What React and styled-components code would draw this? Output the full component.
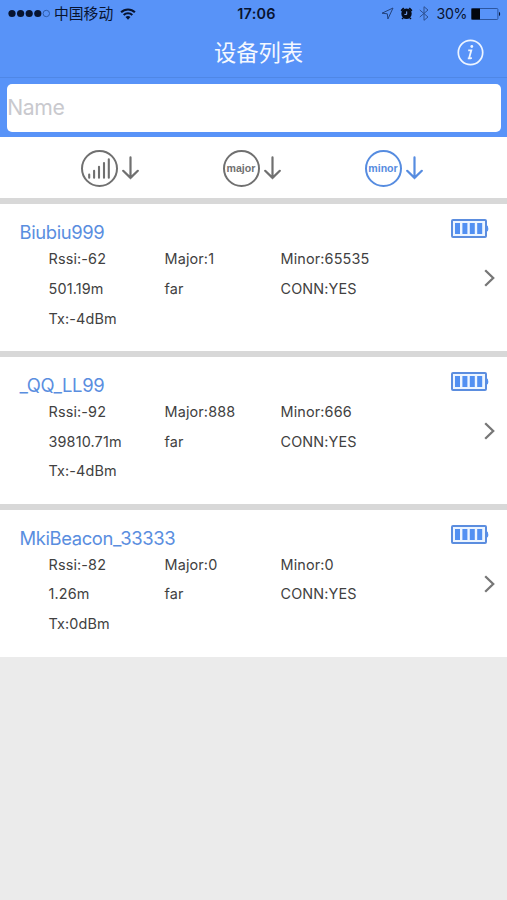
import React, { useState } from "react"
import styled, { createGlobalStyle } from "styled-components"

const GlobalStyle = createGlobalStyle`
  * {
    box-sizing: border-box;
  }
  body {
    margin: 0;
    background: #ebebeb;
    font-family: Inter, "Noto Sans CJK SC", sans-serif;
  }
  svg {
    display: block;
    flex: none;
  }
`

const Screen = styled.div`
  width: 507px;
  min-height: 900px;
  background: #ebebeb;
  overflow: hidden;
`

const Header = styled.header`
  height: 137.3px;
  background: #5893f8;
`

const StatusBar = styled.div`
  height: 27px;
  display: grid;
  grid-template-columns: 1fr auto 1fr;
  align-items: center;
  padding: 0 6px 0 8px;
  color: #081430;
`

const StatusGroup = styled.div`
  display: flex;
  align-items: center;
  justify-content: ${({ $end }) => ($end ? "flex-end" : "flex-start")};
`

const Carrier = styled.span`
  margin: -2px 7px 0 4px;
  font-family: "Noto Sans CJK SC", sans-serif;
  font-size: 14.8px;
  line-height: 27px;
`

const Clock = styled.span`
  padding-left: 4px;
  font-size: 14.4px;
  font-weight: 600;
  letter-spacing: 0.3px;
`

const Percent = styled.span`
  margin: 0 4px 0 8px;
  font-size: 14.2px;
  letter-spacing: -0.4px;
`

const TitleBar = styled.div`
  height: 51px;
  display: grid;
  grid-template-columns: 1fr auto 1fr;
  align-items: center;
  padding: 0 23px 0 33px;
  border-bottom: 1px solid #4f87e6;
`

const Title = styled.h1`
  grid-column: 2;
  margin: 0;
  color: #f4f8ff;
  font-family: "Noto Sans CJK SC", sans-serif;
  font-size: 22.3px;
  font-weight: 400;
  line-height: 48px;
  padding-bottom: 2px;
`

const InfoButton = styled.button`
  justify-self: end;
  padding: 0;
  border: 0;
  background: none;
`

const SearchBox = styled.div`
  padding: 6.3px 6px 0 6.7px;
`

const SearchInput = styled.input`
  display: block;
  width: 100%;
  height: 48px;
  padding: 0 0 2px 0.5px;
  border: 0;
  border-radius: 5px;
  outline: none;
  background: #fff;
  font-family: Inter, sans-serif;
  font-size: 21.2px;
  letter-spacing: -0.4px;
  &::placeholder {
    color: #c9c9ce;
    opacity: 1;
  }
`

const Filters = styled.div`
  height: 61.2px;
  display: grid;
  grid-template-columns: repeat(3, 142px);
  padding: 0 0 0 80.5px;
  background: #fff;
`

const Filter = styled.button`
  display: flex;
  align-items: center;
  gap: 4px;
  padding: 0.6px 0 0;
  border: 0;
  background: none;
  color: ${({ $active }) => ($active ? "#568ce0" : "#707070")};
`

const Badge = styled.span`
  width: 37px;
  height: 37px;
  display: flex;
  align-items: center;
  justify-content: center;
  border: 2px solid currentColor;
  border-radius: 50%;
  font-family: "Liberation Sans", Arial, sans-serif;
  font-size: 10.6px;
  font-weight: 700;
  line-height: 12px;
  padding-bottom: 1px;
`

const List = styled.ul`
  margin: 0;
  padding: 0;
  list-style: none;
`

const Card = styled.li`
  height: 152.85px;
  padding: 14.8px 12px 0 19.5px;
  border-top: 6px solid #d8d8d8;
  background: #fff;
`

const CardTop = styled.div`
  height: 29.7px;
  display: flex;
  justify-content: space-between;
  padding-right: 6px;
`

const Name = styled.h2`
  margin: 0;
  color: #5a8edf;
  font-size: 18.4px;
  font-weight: 400;
  line-height: 27px;
  letter-spacing: -0.37px;
  white-space: pre;
`

const CardBody = styled.div`
  display: flex;
  justify-content: space-between;
`

const Details = styled.div`
  display: grid;
  grid-template-columns: 116px 116px 130px;
  grid-auto-rows: 29.8px;
  padding-left: 29px;
  color: #414141;
  font-size: 14.4px;
  line-height: 20px;
  letter-spacing: 0.15px;
  white-space: nowrap;
`

const Chevron = styled.svg`
  margin-top: 20.5px;
`

const devices = [
  {
    name: "Biubiu999",
    rssi: -62,
    major: 1,
    minor: 65535,
    distance: "501.19m",
    tx: -4,
  },
  {
    name: "_QQ_LL99",
    rssi: -92,
    major: 888,
    minor: 666,
    distance: "39810.71m",
    tx: -4,
  },
  {
    name: "MkiBeacon_33333",
    rssi: -82,
    major: 0,
    minor: 0,
    distance: "1.26m",
    tx: 0,
  },
]

const SignalDots = () => (
  <svg width="42" height="9" viewBox="0 0 42 9" fill="currentColor">
    {[4, 12.6, 21.2, 29.8].map(x => (
      <circle key={x} cx={x} cy="4.5" r="3.6" />
    ))}
    <circle cx="38.3" cy="4.5" r="3.2" fill="none" stroke="#2f5ca8" />
  </svg>
)

const WifiIcon = () => (
  <svg width="16" height="12" viewBox="0 0 16 12" fill="none">
    <g stroke="currentColor" strokeWidth="2.1">
      <path d="M1.1 4.3a9.8 9.8 0 0 1 13.8 0" />
      <path d="M3.7 7a6.1 6.1 0 0 1 8.6 0" />
    </g>
    <path d="M8 11.7 5.5 9.1a3.6 3.6 0 0 1 5 0z" fill="currentColor" />
  </svg>
)

const LocationIcon = () => (
  <svg width="13" height="13" viewBox="0 0 13 13" fill="none">
    <path
      d="M12 1 1 6.2l5.3.6L6.9 12z"
      stroke="#23427c"
      strokeLinejoin="round"
    />
  </svg>
)

const AlarmIcon = () => (
  <svg
    width="13"
    height="13"
    viewBox="0 0 13 13"
    style={{ marginLeft: 6 }}
    fill="none"
  >
    <circle cx="6.5" cy="6.8" r="5.2" fill="#050b18" />
    <path
      d="M1.2 3.8 3.8 1.2M11.8 3.8 9.2 1.2M3 11l-.8 1M10 11l.8 1"
      stroke="#050b18"
      strokeWidth="1.8"
    />
    <path d="M4.4 7.4h2.3V4.4" stroke="#7caaff" />
  </svg>
)

const BluetoothIcon = () => (
  <svg
    width="10"
    height="15"
    viewBox="0 0 10 15"
    style={{ marginLeft: 6 }}
    fill="none"
  >
    <path d="M.8 4 9 11l-4 3.3V.7L9 4 .8 11" stroke="#2d5090" />
  </svg>
)

const PhoneBattery = () => (
  <svg width="30" height="12" viewBox="0 0 30 12">
    <rect
      x=".5"
      y=".5"
      width="26.4"
      height="11"
      rx="1"
      fill="none"
      stroke="#2c56a0"
    />
    <path d="M.5.5H9v11H.5z" fill="#02060e" />
    <path d="M28 3.8a2.6 2.6 0 0 1 0 4.4z" fill="#0a1a3a" />
  </svg>
)

const InfoIcon = () => (
  <svg width="27" height="27" viewBox="0 0 27 27" fill="none">
    <circle cx="13.5" cy="13.5" r="12.2" stroke="#eef5ff" strokeWidth="1.7" />
    <path
      d="M11.2 11.3h3.1l-1.8 6.4q-.5 1.8 1 1.6l1.3-.5M10.8 19.3h2"
      stroke="#eef5ff"
      strokeWidth="1.8"
    />
    <circle cx="14.8" cy="7.5" r="1.4" fill="#eef5ff" />
  </svg>
)

const SignalBars = () => (
  <svg
    width="24"
    height="22"
    viewBox="0 0 24 22"
    stroke="currentColor"
    strokeWidth="2.1"
    strokeLinecap="round"
  >
    <path d="M2.2 20.8v-3.2M7.1 20.8v-7M12 20.8V9.8M17 20.8V6M21.8 20.8V2.2" />
  </svg>
)

const DownArrow = () => (
  <svg width="17" height="24" viewBox="0 0 17 24" fill="none">
    <path
      d="M8.5 1.4V22M1.2 14.8l7.3 7.1 7.3-7.1"
      stroke="currentColor"
      strokeWidth="2.2"
      strokeLinecap="round"
    />
  </svg>
)

const DeviceBattery = () => (
  <svg width="38" height="20" viewBox="0 0 38 20">
    <rect
      x="1"
      y="1"
      width="34"
      height="17"
      rx="1"
      fill="#edf5ff"
      stroke="#5b8ddf"
      strokeWidth="2"
    />
    <g fill="#5290f2">
      <path d="M4 4h5v11H4zM11.4 4h5v11h-5zM18.8 4h5v11h-5zM26.2 4h5v11h-5z" />
      <path d="M36 6.8h.8q1 2.8 0 5.4H36z" />
    </g>
  </svg>
)

const DeviceCard = ({ device }) => (
  <Card>
    <CardTop>
      <Name>{device.name}</Name>
      <DeviceBattery />
    </CardTop>
    <CardBody>
      <Details>
        <span>Rssi:{device.rssi}</span>
        <span>Major:{device.major}</span>
        <span>Minor:{device.minor}</span>
        <span>{device.distance}</span>
        <span>far</span>
        <span>CONN:YES</span>
        <span>Tx:{device.tx}dBm</span>
      </Details>
      <Chevron width="11" height="18" viewBox="0 0 11 18" fill="none">
        <path d="m1.2 1.2 8 7.8-8 7.8" stroke="#777" strokeWidth="2.3" />
      </Chevron>
    </CardBody>
  </Card>
)

export default function App() {
  const [query, setQuery] = useState("")
  const [sort, setSort] = useState("minor")

  return (
    <Screen>
      <GlobalStyle />
      <Header>
        <StatusBar>
          <StatusGroup>
            <SignalDots />
            <Carrier>中国移动</Carrier>
            <WifiIcon />
          </StatusGroup>
          <Clock>17:06</Clock>
          <StatusGroup $end>
            <LocationIcon />
            <AlarmIcon />
            <BluetoothIcon />
            <Percent>30%</Percent>
            <PhoneBattery />
          </StatusGroup>
        </StatusBar>
        <TitleBar>
          <Title>设备列表</Title>
          <InfoButton>
            <InfoIcon />
          </InfoButton>
        </TitleBar>
        <SearchBox>
          <SearchInput
            value={query}
            onChange={event => setQuery(event.target.value)}
            placeholder="Name"
          />
        </SearchBox>
      </Header>
      <Filters>
        <Filter $active={sort === "rssi"} onClick={() => setSort("rssi")}>
          <Badge>
            <SignalBars />
          </Badge>
          <DownArrow />
        </Filter>
        <Filter $active={sort === "major"} onClick={() => setSort("major")}>
          <Badge>major</Badge>
          <DownArrow />
        </Filter>
        <Filter $active={sort === "minor"} onClick={() => setSort("minor")}>
          <Badge>minor</Badge>
          <DownArrow />
        </Filter>
      </Filters>
      <List>
        {devices.map(device => (
          <DeviceCard key={device.name} device={device} />
        ))}
      </List>
    </Screen>
  )
}
